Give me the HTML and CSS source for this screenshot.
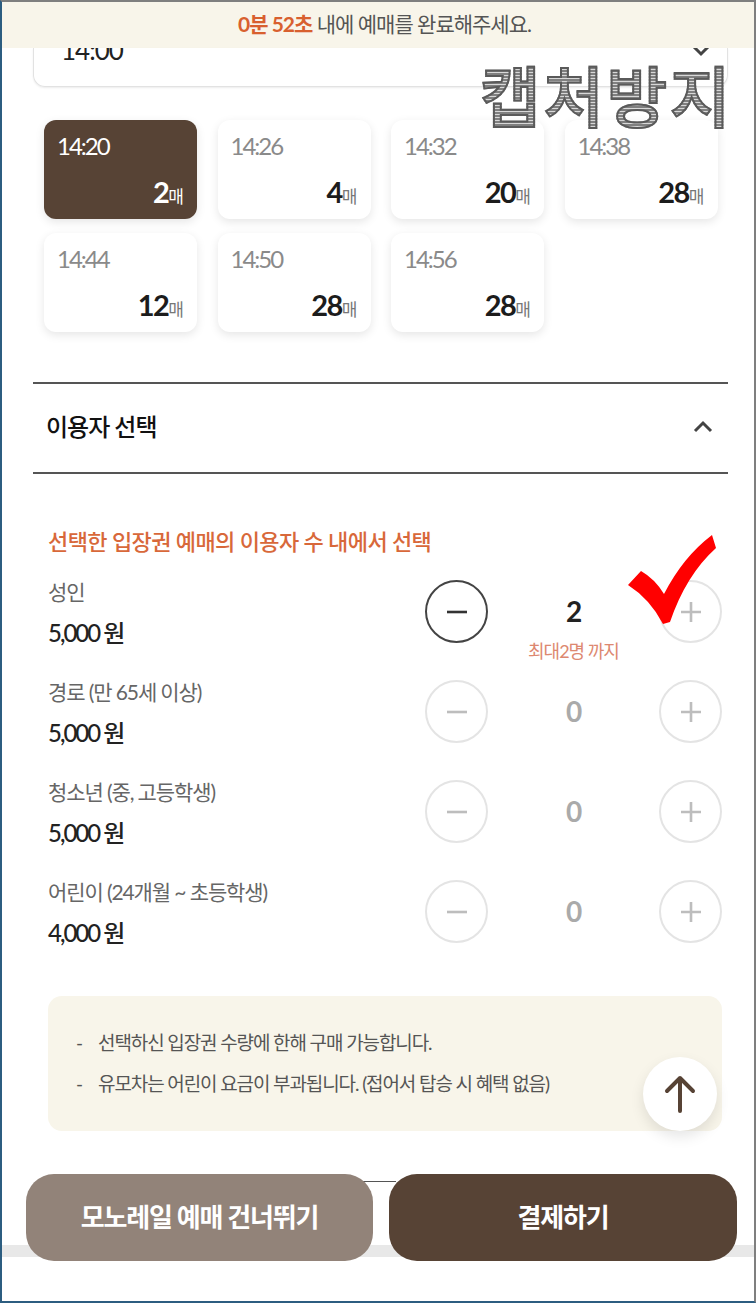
FILE: index.html
```html
<!doctype html>
<html lang="ko">

<head>
    <meta charset="utf-8">
    <meta name="viewport" content="width=device-width, initial-scale=1">
    <title>예매</title>
    <link rel="stylesheet" href="styles.css">
</head>

<body>
    <div class="frame">
        <div class="timer_bar"><b>0분 52초</b> 내에 예매를 완료해주세요.</div>

        <div class="time_select">
            <span>14:00</span>
            <svg class="chevron" width="20" height="12" viewBox="0 0 20 12"><path d="M3 1l7 7 7-7" /></svg>
        </div>

        <div class="slots">
            <div class="slot active"><p class="slot_time">14:20</p><p class="slot_count"><b>2</b>매</p></div>
            <div class="slot"><p class="slot_time">14:26</p><p class="slot_count"><b>4</b>매</p></div>
            <div class="slot"><p class="slot_time">14:32</p><p class="slot_count"><b>20</b>매</p></div>
            <div class="slot"><p class="slot_time">14:38</p><p class="slot_count"><b>28</b>매</p></div>
            <div class="slot"><p class="slot_time">14:44</p><p class="slot_count"><b>12</b>매</p></div>
            <div class="slot"><p class="slot_time">14:50</p><p class="slot_count"><b>28</b>매</p></div>
            <div class="slot"><p class="slot_time">14:56</p><p class="slot_count"><b>28</b>매</p></div>
        </div>

        <div class="section_head">
            <h2>이용자 선택</h2>
            <svg class="chevron" width="22" height="14" viewBox="0 0 22 14"><path d="M3 12l8-8 8 8" /></svg>
        </div>

        <p class="section_note">선택한 입장권 예매의 이용자 수 내에서 선택</p>

        <div class="rows">
            <div class="row">
                <div class="row_info"><p class="row_name">성인</p><p class="row_price">5,000 원</p></div>
                <div class="stepper">
                    <button class="step on"><svg viewBox="0 0 24 24"><path d="M2 12h20" /></svg></button>
                    <div class="qty on">2<span class="qty_hint">최대2명 까지</span></div>
                    <button class="step"><svg viewBox="0 0 24 24"><path d="M2 12h20M12 2v20" /></svg></button>
                </div>
            </div>
            <div class="row">
                <div class="row_info"><p class="row_name">경로 (만 65세 이상)</p><p class="row_price">5,000 원</p></div>
                <div class="stepper">
                    <button class="step"><svg viewBox="0 0 24 24"><path d="M2 12h20" /></svg></button>
                    <div class="qty">0</div>
                    <button class="step"><svg viewBox="0 0 24 24"><path d="M2 12h20M12 2v20" /></svg></button>
                </div>
            </div>
            <div class="row">
                <div class="row_info"><p class="row_name">청소년 (중, 고등학생)</p><p class="row_price">5,000 원</p></div>
                <div class="stepper">
                    <button class="step"><svg viewBox="0 0 24 24"><path d="M2 12h20" /></svg></button>
                    <div class="qty">0</div>
                    <button class="step"><svg viewBox="0 0 24 24"><path d="M2 12h20M12 2v20" /></svg></button>
                </div>
            </div>
            <div class="row">
                <div class="row_info"><p class="row_name">어린이 (24개월 ~ 초등학생)</p><p class="row_price">4,000 원</p></div>
                <div class="stepper">
                    <button class="step"><svg viewBox="0 0 24 24"><path d="M2 12h20" /></svg></button>
                    <div class="qty">0</div>
                    <button class="step"><svg viewBox="0 0 24 24"><path d="M2 12h20M12 2v20" /></svg></button>
                </div>
            </div>
        </div>

        <ul class="notice">
            <li>선택하신 입장권 수량에 한해 구매 가능합니다.</li>
            <li>유모차는 어린이 요금이 부과됩니다. (접어서 탑승 시 혜택 없음)</li>
        </ul>

        <div class="bottom_bar">
            <button class="big_btn skip">모노레일 예매 건너뛰기</button>
            <button class="big_btn pay">결제하기</button>
        </div>

        <!-- things lying over the page -->
        <div class="watermark">캡처방지</div>
        <svg class="red_check" width="90" height="92" viewBox="0 0 90 92"><path d="M0 50L13 36Q27 44 36 59Q55 22 84 0L88 13Q58 40 42 87L35 89Q22 64 0 50z" /></svg>
        <button class="to_top"><svg width="34" height="40" viewBox="0 0 34 40"><path d="M17 37V4M4 17L17 4l13 13" /></svg></button>
    </div>
</body>

</html>
```

FILE: styles.css
```css
* {
    box-sizing: border-box;
}

body {
    margin: 0;
    font-family: "Lato", "Noto Sans CJK KR", sans-serif;
    color: #222;
    background-color: white;
}

p, h2, ul {
    margin: 0;
    padding: 0;
}

button {
    font-family: inherit;
    padding: 0;
    cursor: pointer;
}

.frame {
    position: relative;
    width: 756px;
    height: 1303px;
    overflow: hidden;
    border-style: solid;
    border-width: 2px 2px 2px 2px;
    border-color: #7f7f7f #7f7f7f #2c5d80 #2c5d80;
}

.timer_bar {
    height: 46px;
    padding-left: 13px;
    background-color: #f8f5ea;
    text-align: center;
    font-size: 21px;
    line-height: 44px;
    letter-spacing: -1px;
    color: #555;
}

.timer_bar b {
    color: #d8602f;
    font-weight: 700;
}

.time_select {
    height: 39px;
    margin: 0 26px 0 31px;
    padding: 0 16px 21px 27px;
    display: flex;
    justify-content: space-between;
    align-items: flex-end;
    overflow: hidden;
    border: 1px solid #e2e2e2;
    border-top: none;
    border-radius: 0 0 12px 12px;
    box-shadow: 0 1px 2px rgba(0, 0, 0, 0.08);
    font-size: 26px;
    line-height: 30px;
    letter-spacing: -1px;
}

.time_select .chevron {
    margin-bottom: 7px;
}

.chevron {
    flex: none;
    fill: none;
    stroke: #444;
    stroke-width: 3;
}

.slots {
    display: grid;
    grid-template-columns: repeat(4, 153px);
    grid-auto-rows: 99px;
    column-gap: 20.5px;
    row-gap: 14px;
    margin: 33px 0 0 42px;
}

.slot {
    padding: 11px 13px 6px 13px;
    display: flex;
    flex-direction: column;
    justify-content: space-between;
    border-radius: 12px;
    background-color: white;
    box-shadow: 0 3px 10px rgba(0, 0, 0, 0.1);
}

.slot_time {
    font-size: 24px;
    line-height: 30px;
    letter-spacing: -2px;
    color: #8a8a8a;
}

.slot_count {
    text-align: right;
    font-size: 17px;
    line-height: 32px;
    color: #777;
}

.slot_count b {
    font-size: 29px;
    font-weight: 700;
    letter-spacing: -1.5px;
    color: #1c1c1c;
}

.slot.active {
    background-color: #574335;
}

.slot.active .slot_time,
.slot.active .slot_count,
.slot.active .slot_count b {
    color: white;
}

.section_head {
    height: 92px;
    margin: 50px 26px 0 31px;
    padding: 0 14px 5px 13px;
    display: flex;
    justify-content: space-between;
    align-items: center;
    border-top: 2px solid #555;
    border-bottom: 2px solid #555;
}

.section_head h2 {
    font-size: 24px;
    font-weight: 500;
    letter-spacing: -1px;
    color: #111;
}

.section_note {
    margin: 52px 0 0 46px;
    font-size: 22px;
    line-height: 32px;
    font-weight: 500;
    letter-spacing: -0.6px;
    color: #d8683a;
}

.rows {
    margin: 13px 32px 0 46px;
}

.row {
    height: 100px;
    display: flex;
    justify-content: space-between;
    padding-top: 6px;
}

.row_name {
    font-size: 21px;
    line-height: 30px;
    letter-spacing: -1.1px;
    color: #666;
}

.row_price {
    margin-top: 11px;
    font-size: 24px;
    line-height: 30px;
    font-weight: 500;
    letter-spacing: -2px;
    color: #222;
}

.stepper {
    display: flex;
    align-items: flex-start;
    margin-top: 3px;
}

.step {
    width: 63px;
    height: 63px;
    display: flex;
    align-items: center;
    justify-content: center;
    border: 2px solid #e4e4e4;
    border-radius: 50%;
    background-color: white;
}

.step svg {
    width: 24px;
    height: 24px;
    fill: none;
    stroke: #bdbdbd;
    stroke-width: 2.6;
}

.step.on {
    border-color: #444;
}

.step.on svg {
    stroke: #333;
}

.qty {
    position: relative;
    width: 171px;
    padding-left: 1px;
    text-align: center;
    font-size: 28px;
    line-height: 62px;
    font-weight: 700;
    color: #aaa;
}

.qty.on {
    color: #222;
}

.qty_hint {
    position: absolute;
    left: 0;
    right: 0;
    top: 59px;
    font-size: 18px;
    line-height: 24px;
    font-weight: 400;
    letter-spacing: -1px;
    color: #dd8870;
}

.notice {
    height: 135px;
    margin: 25px 32px 0 46px;
    padding: 26px 28px;
    list-style: none;
    border-radius: 14px;
    background-color: #f8f5ea;
    font-size: 19px;
    line-height: 41px;
    letter-spacing: -1.1px;
    color: #555;
}

.notice li::before {
    content: "-";
    display: inline-block;
    width: 22px;
}

.bottom_bar {
    position: relative;
    margin: 43px 17px 0 24px;
    display: flex;
    gap: 16px;
}

/* grey band and thin line behind the two buttons */
.bottom_bar::before {
    content: "";
    position: absolute;
    left: -24px;
    right: -17px;
    top: 71px;
    height: 12px;
    background-color: #e8e8e8;
}

.bottom_bar::after {
    content: "";
    position: absolute;
    left: 330px;
    width: 40px;
    top: 7px;
    height: 1px;
    background-color: #555;
}

.big_btn {
    position: relative;
    z-index: 1;
    height: 87px;
    padding-bottom: 4px;
    border: none;
    border-radius: 28px;
    color: white;
    font-size: 26px;
    font-weight: 700;
    letter-spacing: -1.2px;
}

.skip {
    width: 347px;
    background-color: #928379;
}

.pay {
    width: 348px;
    background-color: #574335;
}

.to_top {
    position: absolute;
    left: 641px;
    top: 1055px;
    width: 74px;
    height: 74px;
    display: flex;
    align-items: center;
    justify-content: center;
    border: none;
    border-radius: 50%;
    background-color: white;
    box-shadow: 0 6px 14px rgba(0, 0, 0, 0.1);
}

.to_top svg {
    fill: none;
    stroke: #574335;
    stroke-width: 4;
    stroke-linecap: round;
    stroke-linejoin: round;
}

.watermark {
    position: absolute;
    left: 478px;
    top: 50px;
    font-size: 66px;
    line-height: 90px;
    font-weight: 500;
    letter-spacing: 2.5px;
    color: transparent;
    -webkit-text-stroke: 2px #5a5a5a;
    background: repeating-linear-gradient(#808080 0 2px, #d8d8d8 2px 3px);
    -webkit-background-clip: text;
    background-clip: text;
}

.red_check {
    position: absolute;
    left: 626px;
    top: 533px;
    fill: #ff0000;
}
```
